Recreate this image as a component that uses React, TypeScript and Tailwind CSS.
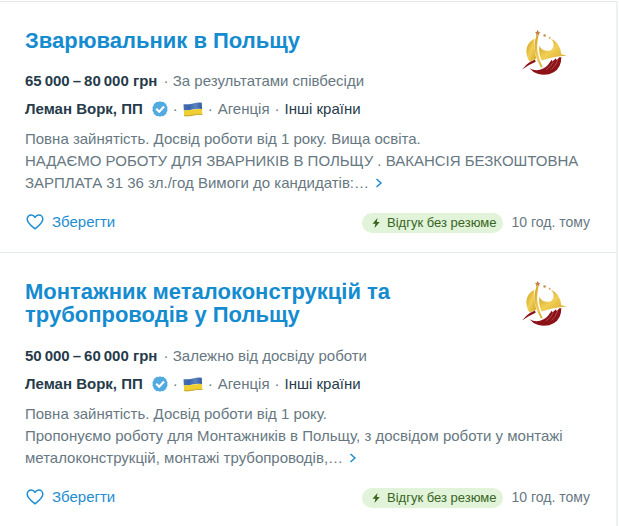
import React, { useState } from 'react';

interface Job {
  id: number;
  title: string;
  salary: string;
  salaryNote: string;
  company: string;
  summary: string;
  details: string;
  posted: string;
}

const jobs: Job[] = [
  {
    id: 1,
    title: 'Зварювальник в Польщу',
    salary: '65\u2009000\u2009–\u200980\u2009000 грн',
    salaryNote: 'За результатами співбесіди',
    company: 'Леман Ворк, ПП',
    summary: 'Повна зайнятість. Досвід роботи від 1 року. Вища освіта.',
    details:
      'НАДАЄМО РОБОТУ ДЛЯ ЗВАРНИКІВ В ПОЛЬЩУ . ВАКАНСІЯ БЕЗКОШТОВНА ЗАРПЛАТА 31 36 зл./год Вимоги до кандидатів:…',
    posted: '10 год. тому',
  },
  {
    id: 2,
    title: 'Монтажник металоконструкцій та трубопроводів у Польщу',
    salary: '50\u2009000\u2009–\u200960\u2009000 грн',
    salaryNote: 'Залежно від досвіду роботи',
    company: 'Леман Ворк, ПП',
    summary: 'Повна зайнятість. Досвід роботи від 1 року.',
    details:
      'Пропонуємо роботу для Монтажників в Польщу, з досвідом роботи у монтажі металоконструкцій, монтажі трубопроводів,…',
    posted: '10 год. тому',
  },
];

const CompanyLogo = ({ id }: { id: string }) => (
  <svg viewBox="38 24 138 140" className="w-[46px] h-[47px] shrink-0" role="img" aria-label="Леман Ворк">
    <defs>
      <linearGradient id={id} x1="0" y1="0" x2="1" y2="1">
        <stop offset="0" stopColor="#c99a1c" />
        <stop offset="0.5" stopColor="#f1cf55" />
        <stop offset="1" stopColor="#d3a426" />
      </linearGradient>
    </defs>
    <path d="M75 53C57 61 48 82 52 99Q54 114 62 121L81 112Q74 88 75 53Z" fill={`url(#${id})`} />
    <path
      d="M82 40L88 40Q81 75 85 92Q89 118 100 138L95 139Q75 106 76 72Q77 55 82 40Z"
      fill={`url(#${id})`}
    />
    <path
      d="M90 74Q96 86 107 88Q126 92 132 78Q136 65 125 53Q152 64 156 99L173 103Q130 106 97 118Q87 98 90 74Z"
      fill={`url(#${id})`}
    />
    <path d="M85 26l2.500 6 6 .5-4.500 4 1.500 6-5.500-3.500-5.500 3.500 1.500-6-4.500-4 6-.5z" fill="#bd8042" />
    <circle cx="106" cy="43" r="4" fill="#c99052" />
    <circle cx="121" cy="50" r="3" fill="#d6a95b" />
    <path d="M38 145L52 130Q62 121 77 115L79 122Q56 132 38 145Z" fill="#8c1218" />
    <path
      d="M61 141Q75 150 92 146Q112 140 121 124L128 115L129 121L140 111L142 117L150 108L156 108Q156 140 133 153Q112 165 85 158Q70 153 61 141Z"
      fill="#8c1218"
    />
    <path d="M110 146Q124 138 132 122M126 145Q138 136 145 117" fill="none" stroke="#d9a3a0" strokeWidth="1.200" />
  </svg>
);

const VerifiedIcon = () => (
  <svg viewBox="0 0 16 16" className="w-4 h-4" role="img" aria-label="Перевірена компанія">
    <path
      d="M8 .2l1.600.7 1.800-.2 1.200 1.400 1.600.8.3 1.800 1.100 1.500-.4 1.800.4 1.800-1.100 1.500-.3 1.800-1.600.8-1.200 1.400-1.800-.2L8 15.800l-1.600-.7-1.800.2-1.200-1.400-1.600-.8-.3-1.800L.4 9.800.8 8 .4 6.200l1.100-1.500.3-1.800 1.600-.8L4.600.7l1.800.2z"
      fill="#52abe0"
    />
    <path d="M4.200 7.700L7.200 10.700 12 5.500" fill="none" stroke="#fff" strokeWidth="2.200" />
  </svg>
);

const FlagIcon = ({ id }: { id: string }) => (
  <svg viewBox="0 0 20 15" className="w-5 h-[15px]" role="img" aria-label="Україна">
    <defs>
      <linearGradient id={id} x1="0" x2="1" y1="0" y2="0">
        <stop offset="0" stopColor="#496fae" />
        <stop offset="0.3" stopColor="#3863ae" />
        <stop offset="0.65" stopColor="#5c82bd" />
        <stop offset="1" stopColor="#315aa0" />
      </linearGradient>
    </defs>
    <path d="M.5 2.200Q5 2.600 10 1.400T18.800 .8L19 7Q14 6.400 10 7.600T.8 8.200Z" fill={`url(#${id})`} />
    <path d="M.8 8.200Q6 8.600 10 7.600T19 7L19.300 12.800Q14 12.200 10 13.400T1.100 14Z" fill="#efcf32" />
    <path d="M1.100 13.700Q6 14.100 10 13.100T19.300 12.500" fill="none" stroke="#b99b2c" strokeWidth=".8" />
  </svg>
);

const HeartIcon = ({ filled }: { filled: boolean }) => (
  <svg viewBox="0 0 18 16" className="w-[18px] h-4" aria-hidden="true">
    <path
      d="M9 14.800C5 11.500 1.200 8.800 1.200 5.200C1.200 2.700 3 1 5.100 1C6.800 1 8.200 1.800 9 3.300C9.800 1.800 11.200 1 12.900 1C15 1 16.800 2.700 16.800 5.200C16.800 8.800 13 11.500 9 14.800Z"
      fill={filled ? '#1e8dd2' : 'none'}
      stroke="#1e8dd2"
      strokeWidth="1.500"
      strokeLinejoin="round"
    />
  </svg>
);

const Dot = () => <span className="text-[#677882]">·</span>;

const JobCard: React.FC<{ job: Job }> = ({ job }) => {
  const [saved, setSaved] = useState(false);

  return (
    <article className="border-t border-[#e4e8ea] pt-[27px] pb-[19px] pl-[25px] pr-[26px]">
      <div className="flex items-start justify-between gap-5">
        <h2 className="text-[22px] leading-[23px] font-bold">
          <a href="#" className="text-[#158bd0]">{job.title}</a>
        </h2>
        <div className="pr-[22px]">
          <CompanyLogo id={`gold-${job.id}`} />
        </div>
      </div>

      {/* the logo is taller than a one-line title, the salary row tucks in below it */}
      <div className={job.title.length > 30 ? 'mt-[18px]' : '-mt-[6px]'}>
        <span className="font-bold text-[#263b4a] mr-[2px]">{job.salary}</span> <Dot /> {job.salaryNote}
      </div>

      <div className="mt-[6px] flex items-center gap-[5px]">
        <span className="font-bold text-[#263b4a] mr-1">{job.company}</span>
        <VerifiedIcon />
        <Dot />
        <FlagIcon id={`flag-${job.id}`} />
        <Dot />
        <span>Агенція</span>
        <Dot />
        <span className="text-[#263b4a]">Інші країни</span>
      </div>

      <p className="mt-2">
        {job.summary}
        <br />
        {job.details}{' '}
        <a href="#" aria-label="Детальніше" className="inline-block ml-[2px]">
          <svg viewBox="0 0 8 10" className="w-2 h-[10px]" aria-hidden="true">
            <path d="M1.500 1L6 5L1.500 9" fill="none" stroke="#1e8dd2" strokeWidth="1.500" />
          </svg>
        </a>
      </p>

      <div className="mt-[17px] flex items-center justify-between">
        <button
          type="button"
          aria-pressed={saved}
          onClick={() => setSaved(!saved)}
          className="flex items-center gap-2 pl-px text-[#1e8dd2]"
        >
          <HeartIcon filled={saved} />
          Зберегти
        </button>
        <div className="flex items-end gap-2 text-sm leading-[22px]">
          <span className="flex items-center gap-[5px] h-5 rounded-full bg-[#e1f3d8] pl-2 pr-[7px] text-[13px] text-[#38641f]">
            <svg viewBox="0 0 12 12" className="w-3 h-3" aria-hidden="true">
              <path d="M7.500 1L2.500 6.800H5.400L4.500 11L9.800 5H6.800Z" fill="#38641f" />
            </svg>
            Відгук без резюме
          </span>
          <time>{job.posted}</time>
        </div>
      </div>
    </article>
  );
};

export default function App() {
  return (
    <div className="min-h-screen bg-white pr-px pt-px font-['Liberation_Sans',Arial,sans-serif] text-[15px] leading-[22px] text-[#677882]">
      <main className="border-r-2 border-[#eef0f1]">
        {jobs.map((job) => (
          <JobCard key={job.id} job={job} />
        ))}
      </main>
    </div>
  );
}
